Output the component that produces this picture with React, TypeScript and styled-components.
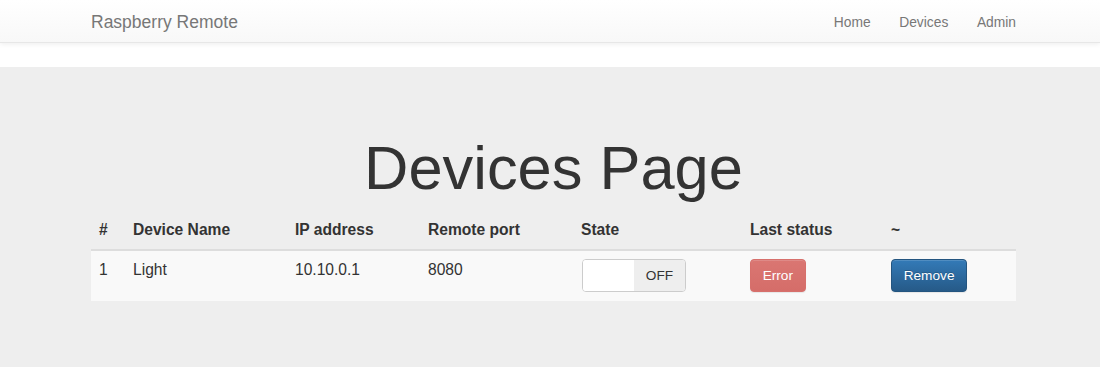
import React from 'react';
import styled, { createGlobalStyle } from 'styled-components';

const GlobalStyle = createGlobalStyle`
  html, body {
    margin: 0;
    padding: 0;
    background: #fff;
  }
  body {
    font-family: "Liberation Sans", Arial, Helvetica, sans-serif;
    color: #333;
  }
  * {
    box-sizing: border-box;
  }
`;

const devices = [
  { id: 1, name: 'Light', ip: '10.10.0.1', port: '8080', state: false, status: 'Error' },
];

const columns = [
  { label: '#', width: 34 },
  { label: 'Device Name', width: 162 },
  { label: 'IP address', width: 133 },
  { label: 'Remote port', width: 153 },
  { label: 'State', width: 169 },
  { label: 'Last status', width: 141 },
  { label: '~', width: 133 },
];

const App = () => {
  return (
    <>
      <GlobalStyle />
      <Navbar>
        <Container>
          <Brand href="#">Raspberry Remote</Brand>
          <NavLinks>
            <li><a href="#">Home</a></li>
            <li><a href="#">Devices</a></li>
            <li><a href="#">Admin</a></li>
          </NavLinks>
        </Container>
      </Navbar>
      <Jumbotron>
        <Container $column>
          <Title>Devices Page</Title>
          <Table>
            <colgroup>
              {columns.map((c) => (
                <Col key={c.label} $w={c.width} />
              ))}
            </colgroup>
            <thead>
              <tr>
                {columns.map((c) => (
                  <Th key={c.label}>{c.label}</Th>
                ))}
              </tr>
            </thead>
            <tbody>
              {devices.map((d, i) => (
                <Row key={d.id} $striped={i % 2 === 0}>
                  <Td>{d.id}</Td>
                  <Td>{d.name}</Td>
                  <Td>{d.ip}</Td>
                  <Td>{d.port}</Td>
                  <Td>
                    <Switch>
                      <SwitchHandle />
                      <SwitchLabel>{d.state ? 'ON' : 'OFF'}</SwitchLabel>
                    </Switch>
                  </Td>
                  <Td>
                    <Button $variant="danger">{d.status}</Button>
                  </Td>
                  <Td>
                    <Button $variant="primary">Remove</Button>
                  </Td>
                </Row>
              ))}
            </tbody>
          </Table>
        </Container>
      </Jumbotron>
    </>
  );
};

const Container = styled.div<{ $column?: boolean }>`
  width: 925px;
  margin-left: 91px;
  display: flex;
  flex-direction: ${(p) => (p.$column ? 'column' : 'row')};
  align-items: ${(p) => (p.$column ? 'stretch' : 'center')};
  justify-content: space-between;
  height: 100%;
`;

const Navbar = styled.nav`
  height: 43px;
  background-image: linear-gradient(to bottom, #fff 0, #f8f8f8 100%);
  border-bottom: 1px solid #e7e7e7;
  box-shadow: inset 0 1px 0 rgba(255, 255, 255, 0.15), 0 1px 5px rgba(0, 0, 0, 0.075);
  margin-bottom: 24px;
`;

const Brand = styled.a`
  font-size: 17.5px;
  line-height: 20px;
  color: #777;
  text-decoration: none;
  text-shadow: 0 1px 0 rgba(255, 255, 255, 0.25);
  margin-top: 1px;
`;

const NavLinks = styled.ul`
  list-style: none;
  margin: 0;
  padding: 0;
  display: flex;
  padding-top: 3px;

  li a {
    display: block;
    font-size: 13.8px;
    line-height: 19.5px;
    color: #777;
    text-decoration: none;
    padding: 0 14.3px;
    text-shadow: 0 1px 0 rgba(255, 255, 255, 0.25);
  }

  li:last-child a {
    padding-right: 0;
  }
`;

const Jumbotron = styled.div`
  background: #eee;
  padding: 67px 0 66px;
`;

const Title = styled.h1`
  margin: 0 0 10px;
  font-size: 61.4px;
  line-height: 1.1;
  font-weight: 400;
  text-align: center;
  color: #333;
`;

const Table = styled.table`
  width: 925px;
  border-collapse: collapse;
  border-spacing: 0;
  table-layout: fixed;
  font-size: 15.6px;
  line-height: 1.42857;
`;

const Col = styled.col<{ $w: number }>`
  width: ${(p) => p.$w}px;
`;

const Th = styled.th`
  text-align: left;
  font-weight: bold;
  padding: 7.8px 8px;
  vertical-align: bottom;
  border-bottom: 2px solid #ddd;
`;

const Row = styled.tr<{ $striped?: boolean }>`
  background: ${(p) => (p.$striped ? '#f9f9f9' : 'transparent')};
`;

const Td = styled.td`
  padding: 7.8px 8px 8.8px;
  vertical-align: top;
  border-top: 1px solid #ddd;
`;

const Switch = styled.div`
  display: flex;
  width: 104px;
  height: 33px;
  margin-left: 1px;
  border: 1px solid #ccc;
  border-radius: 4px;
  overflow: hidden;
  background: #fff;
`;

const SwitchHandle = styled.span`
  flex: 1;
  background: #fff;
`;

const SwitchLabel = styled.span`
  flex: 1;
  display: flex;
  align-items: center;
  justify-content: center;
  background: #eee;
  color: #333;
  font-size: 13.65px;
`;

const Button = styled.button<{ $variant: 'danger' | 'primary' }>`
  display: block;
  height: 33px;
  padding: 0 11.7px;
  font-family: inherit;
  font-size: 13.65px;
  line-height: 1;
  color: #fff;
  border-radius: 4px;
  cursor: pointer;
  border: 1px solid ${(p) => (p.$variant === 'danger' ? '#d7706c' : '#245580')};
  background-image: ${(p) =>
    p.$variant === 'danger'
      ? 'linear-gradient(to bottom, #da7672 0, #d56d69 100%)'
      : 'linear-gradient(to bottom, #337ab7 0, #265a88 100%)'};
  text-shadow: ${(p) => (p.$variant === 'danger' ? 'none' : '0 -1px 0 rgba(0, 0, 0, 0.2)')};
  box-shadow: inset 0 1px 0 rgba(255, 255, 255, 0.15), 0 1px 1px rgba(0, 0, 0, 0.075);
`;

export default App;
